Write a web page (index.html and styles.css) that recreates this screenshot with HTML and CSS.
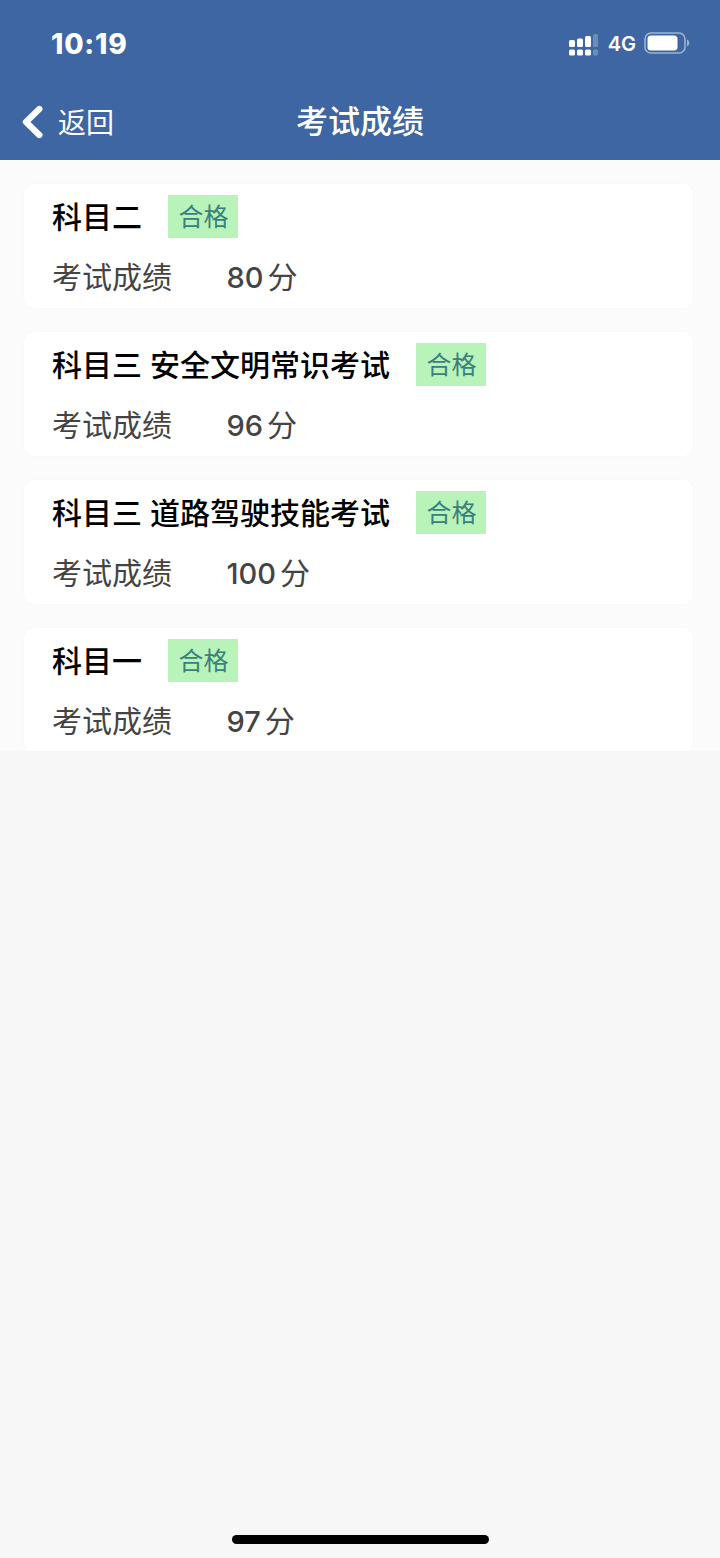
FILE: index.html
```html
<!DOCTYPE html>
<html lang="zh-CN">
<head>
  <meta charset="UTF-8">
  <title>考试成绩</title>
  <link rel="stylesheet" href="styles.css">
</head>
<body>
  <header class="header">
    <div class="status-bar">
      <span class="time">10:19</span>
      <div class="status-icons">
        <svg class="signal" width="30" height="22" viewBox="0 0 30 22" fill="#fff">
          <rect x="0" y="6" width="6" height="7" rx="1.5"/>
          <rect x="8" y="4.500" width="6" height="8.500" rx="1.5"/>
          <rect x="16" y="2" width="6" height="11" rx="1.5"/>
          <rect x="24" y="0" width="5" height="13" rx="1.5" opacity="0.25"/>
          <rect x="0" y="15.500" width="6" height="6" rx="1.5"/>
          <rect x="8" y="15.500" width="6" height="6" rx="1.5"/>
          <rect x="16" y="15.500" width="6" height="6" rx="1.5"/>
          <rect x="24" y="15.500" width="5" height="6" rx="1.5" opacity="0.25"/>
        </svg>
        <span class="network">4G</span>
        <svg class="battery" width="46" height="22" viewBox="0 0 46 22">
          <rect x="1" y="1" width="40" height="20" rx="6" fill="none" stroke="#fff" stroke-width="1.6" opacity="0.5"/>
          <rect x="3.5" y="3.5" width="30" height="15" rx="3.5" fill="#fff"/>
          <path d="M43 7.5c3 1.2 3 5.800 0 7z" fill="#fff" opacity="0.5"/>
        </svg>
      </div>
    </div>
    <nav class="nav-bar">
      <a class="back">
        <svg width="22" height="34" viewBox="0 0 22 34">
          <path d="M18.300 4L5 17L18.300 30" fill="none" stroke="#fff" stroke-width="6.300" stroke-linecap="round" stroke-linejoin="round"/>
        </svg>
        <span class="back-text">返回</span>
      </a>
      <h1 class="title">考试成绩</h1>
    </nav>
  </header>

  <main class="list">
    <section class="card">
      <div class="row">
        <h2 class="subject">科目二</h2>
        <span class="badge">合格</span>
      </div>
      <p class="score"><span class="label">考试成绩</span><span class="num">80</span><span class="unit">分</span></p>
    </section>
    <section class="card">
      <div class="row">
        <h2 class="subject">科目三 安全文明常识考试</h2>
        <span class="badge">合格</span>
      </div>
      <p class="score"><span class="label">考试成绩</span><span class="num">96</span><span class="unit">分</span></p>
    </section>
    <section class="card">
      <div class="row">
        <h2 class="subject">科目三 道路驾驶技能考试</h2>
        <span class="badge">合格</span>
      </div>
      <p class="score"><span class="label">考试成绩</span><span class="num">100</span><span class="unit">分</span></p>
    </section>
    <section class="card">
      <div class="row">
        <h2 class="subject">科目一</h2>
        <span class="badge">合格</span>
      </div>
      <p class="score"><span class="label">考试成绩</span><span class="num">97</span><span class="unit">分</span></p>
    </section>
  </main>

  <div class="home-indicator"></div>
</body>
</html>
```
FILE: styles.css
```css
* {
  box-sizing: border-box;
}

body {
  margin: 0;
  height: 1558px;
  display: flex;
  flex-direction: column;
  background-color: #f7f7f7;
  font-family: Inter, "Noto Sans CJK SC", sans-serif;
}

h1, h2, p {
  margin: 0;
  font-weight: 500;
}

.header {
  height: 160px;
  background-color: #3e66a3;
  color: #fff;
}

.status-bar {
  height: 86px;
  padding: 0 30px 0 51px;
  display: flex;
  align-items: center;
  justify-content: space-between;
}

.time {
  padding-top: 1px;
  font-size: 28px;
  font-weight: 800;
  letter-spacing: 0.8px;
}

.status-icons {
  display: flex;
  align-items: center;
}

.signal {
  margin-top: 3px;
}

.network {
  margin: 2px 8px 0 9px;
  font-size: 20px;
  font-weight: 600;
}

.nav-bar {
  height: 72px;
  display: grid;
  grid-template-columns: 1fr auto 1fr;
  align-items: center;
}

.back {
  display: flex;
  align-items: center;
  gap: 15px;
  padding-left: 21px;
  font-size: 28px;
}

.back-text {
  padding-bottom: 3px;
}

.title {
  padding-bottom: 6px;
  font-size: 32px;
}

.list {
  height: 591px;
  padding: 24px 27px 0 24px;
  display: flex;
  flex-direction: column;
  gap: 24px;
  background-color: #fbfbfb;
  overflow: hidden;
}

.card {
  flex: none;
  height: 124px;
  padding: 11px 28px 0;
  border-radius: 10px;
  background-color: #fff;
  box-shadow: 0 0 3px #f7f7f7;
}

.row {
  display: flex;
  align-items: center;
  height: 43px;
}

.subject {
  padding-bottom: 4px;
  color: #000;
  font-size: 30px;
}

.badge {
  width: 70px;
  height: 43px;
  margin-left: 26.4px;
  background-color: #b8f4ba;
  color: #3a807c;
  font-size: 25px;
  line-height: 44px;
  text-align: center;
}

.score {
  display: flex;
  align-items: center;
  height: 44px;
  margin-top: 17px;
  color: #444;
  font-size: 30px;
  font-weight: 400;
}

.label {
  width: 174.5px;
  padding-bottom: 4px;
}

.num {
  margin-right: 4px;
  font-size: 29px;
  font-weight: 550;
}

.unit {
  padding-bottom: 4px;
}

.home-indicator {
  width: 257px;
  height: 9px;
  margin: auto auto 14px;
  border-radius: 5px;
  background-color: #000;
}
```
